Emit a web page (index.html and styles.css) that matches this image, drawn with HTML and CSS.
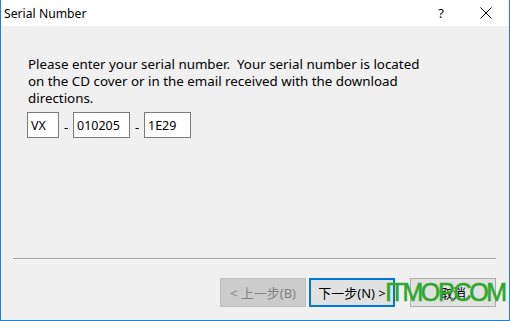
FILE: index.html
```html
<!DOCTYPE html>
<html lang="en">
<head>
    <meta charset="UTF-8">
    <title>Serial Number</title>
    <link rel="stylesheet" href="styles.css">
</head>
<body>
    <div class="window">
        <div class="titlebar">
            <span class="title">Serial Number</span>
            <span class="help">?</span>
            <span class="close">
                <svg width="12" height="12" viewBox="0 0 12 12">
                    <path d="M0.5 0.5 L11.5 11.5 M11.5 0.5 L0.5 11.5" stroke="#000" stroke-width="1" fill="none"/>
                </svg>
            </span>
        </div>

        <div class="content">
            <p class="message">
                Please enter your serial number.&nbsp; Your serial number is located<br>
                on the CD cover or in the email received with the download<br>
                directions.
            </p>

            <div class="serial">
                <input type="text" class="part part-a" value="VX">
                <span class="dash">-</span>
                <input type="text" class="part part-b" value="010205">
                <span class="dash">-</span>
                <input type="text" class="part part-c" value="1E29">
            </div>

            <div class="spacer"></div>

            <div class="separator"></div>

            <div class="buttons">
                <button class="btn" disabled>&lt; 上一步(B)</button>
                <button class="btn btn-default">下一步(N) &gt;</button>
                <button class="btn btn-cancel">取消</button>
            </div>
        </div>

        <div class="watermark">ITMOP.COM</div>
    </div>
</body>
</html>
```

FILE: styles.css
```css
html, body {
    margin: 0;
    padding: 0;
}

body {
    font-family: 'Noto Sans', 'Noto Sans CJK SC', sans-serif;
    font-size: 12px;
    color: #000;
    background-color: #f0f0f0;
}

.window {
    position: relative;
    width: 510px;
    height: 321px;
    box-sizing: border-box;
    border: 1px solid #1883d7;
    border-top: none;
    background-color: #f0f0f0;
    display: flex;
    flex-direction: column;
}

.titlebar {
    height: 26px;
    background-color: #fff;
    display: flex;
    align-items: center;
    padding-left: 3px;
}

.title {
    flex: 1;
    font-size: 12.2px;
}

.help {
    width: 46px;
    text-align: center;
    font-size: 13px;
    margin-right: -1px;
}

.close {
    width: 46px;
    display: flex;
    justify-content: center;
    align-items: center;
}

.content {
    flex: 1;
    display: flex;
    flex-direction: column;
    padding: 30px 13px 13px 12px;
}

.message {
    margin: 0 0 0 15px;
    font-size: 13.35px;
    line-height: 17px;
}

.serial {
    display: flex;
    align-items: center;
    margin: 5px 0 0 14px;
}

.part {
    height: 26px;
    box-sizing: border-box;
    border: 1px solid #7a7a7a;
    background-color: #fff;
    font-family: inherit;
    font-size: 12.5px;
    padding: 0 3px;
    margin: 0;
    outline: none;
}

.part-a { width: 32px; }
.part-b { width: 57px; }
.part-c { width: 47px; }

.dash {
    width: 14px;
    text-align: center;
    padding-top: 4px;
    font-size: 13px;
}

.spacer {
    flex: 1;
}

.separator {
    height: 1px;
    background-color: #a0a0a0;
    border-bottom: 1px solid #fff;
}

.buttons {
    display: flex;
    justify-content: flex-end;
    gap: 3px;
    margin-top: 18px;
}

.btn {
    width: 86px;
    height: 29px;
    box-sizing: border-box;
    border: 1px solid #adadad;
    background-color: #e1e1e1;
    font-family: inherit;
    font-size: 13px;
    color: #000;
    padding: 0;
}

.btn:disabled {
    background-color: #cccccc;
    border-color: #bfbfbf;
    color: #838383;
}

.btn-default {
    border: 2px solid #0078d7;
}

.btn-cancel {
    margin-left: 12px;
}

.watermark {
    position: absolute;
    left: 384px;
    top: 278px;
    font-family: 'Liberation Sans', sans-serif;
    font-size: 25px;
    letter-spacing: -2.4px;
    color: #2ea82e;
    -webkit-text-stroke: 0.6px #2ea82e;
}
```
